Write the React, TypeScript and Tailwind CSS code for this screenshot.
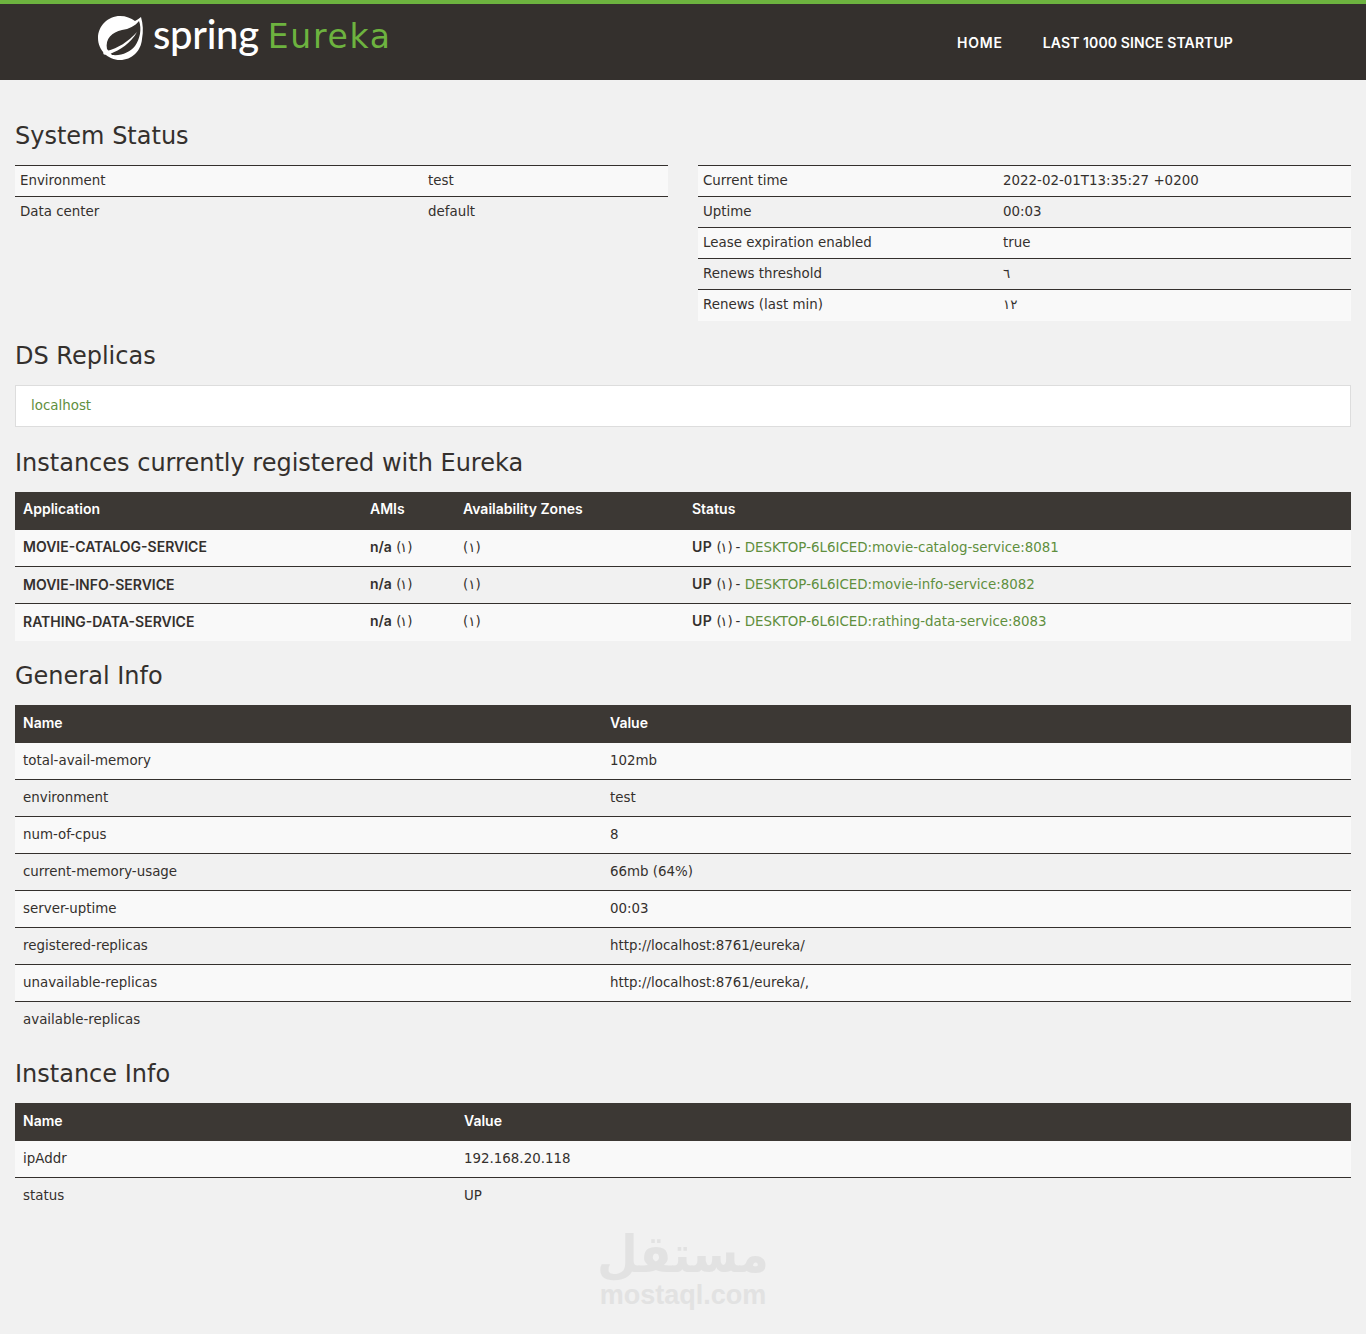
const bodyFont = "font-['DejaVu_Sans',sans-serif]";
const boldFont = "font-['Inter',sans-serif] font-semibold";

const SpringLogo = () => (
    <svg width="46" height="46" viewBox="0 0 46 46" className="shrink-0">
        <path
            fill="#ffffff"
            d="M22 1C28 1 33 3 37 6C39 5 41 3.500 43 2C45 9 45.500 16 44 24C43 36 34 45 22 45C10 45 0 35 0 23C0 11 10 1 22 1Z"
        />
        <path
            fill="#34302d"
            d="M9 34C7 24 14 17 24 15C31 14 37 11 41 6C44 14 42 24 37 31C32 37 24 41 14 40Z"
        />
        <path fill="#ffffff" d="M9 36C20 33 30 27 39 17C33 28 22 35 12 39Z" />
        <circle cx="7" cy="38" r="1.800" fill="#ffffff" />
    </svg>
);

const SectionTitle = ({ title, gap }: { title: string; gap: string }) => (
    <h2 className={`${gap} mb-[16px] text-[24px] leading-[26px] text-[#34302d] ${bodyFont}`}>
        {title}
    </h2>
);

const StatusTable = ({ rows, labelWidth }: { rows: string[][]; labelWidth: string }) => (
    <table className="w-full table-fixed border-collapse">
        <colgroup>
            <col className={labelWidth} />
            <col />
        </colgroup>
        <tbody>
            {rows.map((row, i) => (
                <tr key={row[0]} className={`h-[31px] border-t border-[#34302d] ${i % 2 === 0 ? "bg-[#f9f9f9]" : ""}`}>
                    <td className="px-[5px] text-[13.4px]">{row[0]}</td>
                    <td className="px-[5px] text-[13.4px]">{row[1]}</td>
                </tr>
            ))}
        </tbody>
    </table>
);

const DataTable = ({ heads, rows, firstCol }: { heads: string[]; rows: string[][]; firstCol: string }) => (
    <table className="w-full table-fixed border-collapse">
        <colgroup>
            <col className={firstCol} />
            <col />
        </colgroup>
        <thead>
            <tr className="h-[38px] bg-[#3c3834] text-white">
                {heads.map((head) => (
                    <th key={head} className={`px-2 pb-[3px] text-left text-[14px] ${boldFont}`}>{head}</th>
                ))}
            </tr>
        </thead>
        <tbody>
            {rows.map((row, i) => (
                <tr key={row[0]} className={`h-[37px] ${i > 0 ? "border-t border-[#34302d]" : ""} ${i % 2 === 0 ? "bg-[#f9f9f9]" : ""}`}>
                    <td className="px-2 text-[13.4px]">{row[0]}</td>
                    <td className="px-2 text-[13.4px]">{row[1]}</td>
                </tr>
            ))}
        </tbody>
    </table>
);

const instances = [
    ["MOVIE-CATALOG-SERVICE", "DESKTOP-6L6ICED:movie-catalog-service:8081"],
    ["MOVIE-INFO-SERVICE", "DESKTOP-6L6ICED:movie-info-service:8082"],
    ["RATHING-DATA-SERVICE", "DESKTOP-6L6ICED:rathing-data-service:8083"],
];

const generalInfo = [
    ["total-avail-memory", "102mb"],
    ["environment", "test"],
    ["num-of-cpus", "8"],
    ["current-memory-usage", "66mb (64%)"],
    ["server-uptime", "00:03"],
    ["registered-replicas", "http://localhost:8761/eureka/"],
    ["unavailable-replicas", "http://localhost:8761/eureka/,"],
    ["available-replicas", ""],
];

export default function App() {
    return (
        <div className={`min-h-[1334px] overflow-hidden bg-[#f1f1f1] text-[#34302d] ${bodyFont}`}>
            <header className="flex h-[80px] items-center border-t-4 border-[#6db33f] bg-[#34302d] pl-[98px] pr-[133px]">
                <div className="flex items-center -mt-[8px]">
                    <SpringLogo />
                    <span className="ml-[9px] -mt-[8px] text-[40px] leading-none font-medium tracking-[-0.300px] text-white font-['Lato',sans-serif]">spring</span>
                    <span className="ml-[9px] -mt-[3px] text-[33px] leading-none tracking-[1.700px] text-[#6db33f] font-['DejaVu_Sans',sans-serif]">Eureka</span>
                </div>
                <nav className={`ml-auto flex gap-10 text-[14px] text-white ${boldFont}`}>
                    <a className="tracking-[0.800px]">HOME</a>
                    <a className="tracking-[0.100px]">LAST 1000 SINCE STARTUP</a>
                </nav>
            </header>
            <main className="px-[15px]">
                <SectionTitle title="System Status" gap="mt-[43px]" />
                <div className="grid grid-cols-2 items-start gap-[30px]">
                    <StatusTable
                        labelWidth="w-[408px]"
                        rows={[
                            ["Environment", "test"],
                            ["Data center", "default"],
                        ]}
                    />
                    <StatusTable
                        labelWidth="w-[300px]"
                        rows={[
                            ["Current time", "2022-02-01T13:35:27 +0200"],
                            ["Uptime", "00:03"],
                            ["Lease expiration enabled", "true"],
                            ["Renews threshold", "٦"],
                            ["Renews (last min)", "١٢"],
                        ]}
                    />
                </div>
                <SectionTitle title="DS Replicas" gap="mt-[22px]" />
                <div className="flex h-[42px] items-center border border-[#dddddd] bg-white px-[15px] pt-[1px] text-[13.4px]">
                    <a className="text-[#5f8f3e]">localhost</a>
                </div>
                <SectionTitle title="Instances currently registered with Eureka" gap="mt-[23px]" />
                <table className="w-full table-fixed border-collapse">
                    <colgroup>
                        <col className="w-[347px]" />
                        <col className="w-[93px]" />
                        <col className="w-[229px]" />
                        <col />
                    </colgroup>
                    <thead>
                        <tr className="h-[38px] bg-[#3c3834] text-white">
                            {["Application", "AMIs", "Availability Zones", "Status"].map((head) => (
                                <th key={head} className={`px-2 pb-[4px] text-left text-[14px] ${boldFont}`}>{head}</th>
                            ))}
                        </tr>
                    </thead>
                    <tbody>
                        {instances.map((row, i) => (
                            <tr key={row[0]} className={`h-[37px] ${i > 0 ? "border-t border-[#34302d]" : ""} ${i % 2 === 0 ? "bg-[#f9f9f9]" : ""}`}>
                                <td className={`px-2 pb-[2px] text-[14px] ${boldFont}`}>{row[0]}</td>
                                <td className="px-2 pb-[2px] text-[13.4px]">
                                    <b className={`text-[14px] ${boldFont}`}>n/a</b> <span className="tracking-[-1.500px]">(١)</span>
                                </td>
                                <td className="px-2 text-[13.4px]"><span className="tracking-[-1.500px]">(١)</span></td>
                                <td className="px-2 pb-[2px] text-[13.4px]">
                                    <b className={`text-[14px] tracking-[0.500px] ${boldFont}`}>UP</b> <span className="tracking-[-1.500px]">(١)</span> - <a className="text-[#5f8f3e]">{row[1]}</a>
                                </td>
                            </tr>
                        ))}
                    </tbody>
                </table>
                <SectionTitle title="General Info" gap="mt-[22px]" />
                <DataTable heads={["Name", "Value"]} rows={generalInfo} firstCol="w-[587px]" />
                <SectionTitle title="Instance Info" gap="mt-[22px]" />
                <DataTable
                    heads={["Name", "Value"]}
                    firstCol="w-[441px]"
                    rows={[
                        ["ipAddr", "192.168.20.118"],
                        ["status", "UP"],
                    ]}
                />
            </main>
            <footer className="mt-[20px] flex flex-col items-center text-[#e2e2e2]">
                <div className="h-[41px] origin-bottom scale-y-110 text-[47px] leading-[41px] font-bold font-['DejaVu_Sans',sans-serif]" dir="rtl">مستقل</div>
                <div className="mt-[6px] text-[27px] leading-[26px] font-bold font-['Liberation_Sans',sans-serif]">mostaql.com</div>
            </footer>
        </div>
    );
}
